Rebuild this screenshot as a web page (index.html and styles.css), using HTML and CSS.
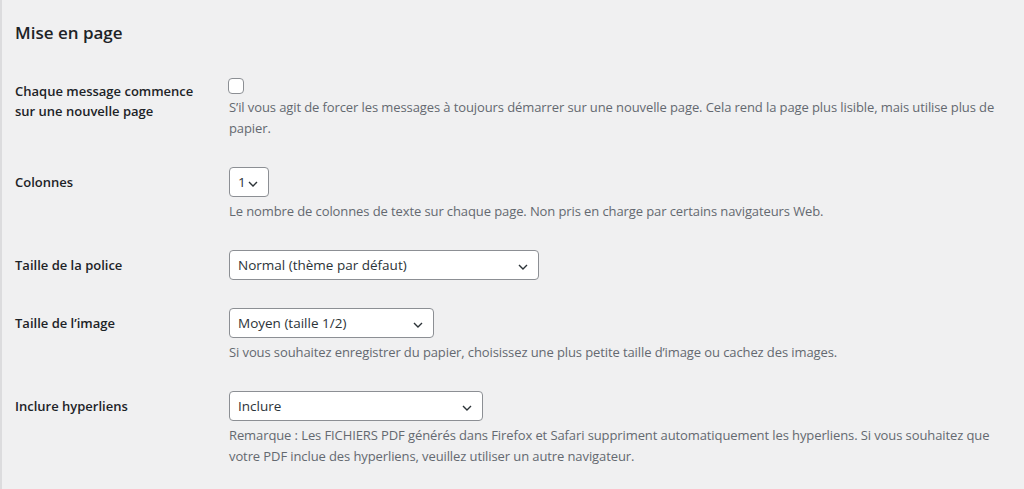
FILE: index.html
```html
<!DOCTYPE html>
<html lang="fr">
<head>
<meta charset="utf-8">
<title>Mise en page</title>
<link rel="stylesheet" href="styles.css">
</head>
<body>
<div class="wrap">
  <h2 class="title">Mise en page</h2>
  <div class="form">
    <div class="row">
      <div class="label label-multi">Chaque message commence<br>sur une nouvelle page</div>
      <div class="field">
        <input type="checkbox" class="check">
        <p class="desc">S’il vous agit de forcer les messages à toujours démarrer sur une nouvelle page. Cela rend la page plus lisible, mais utilise plus de papier.</p>
      </div>
    </div>
    <div class="row">
      <div class="label">Colonnes</div>
      <div class="field">
        <select class="select w-cols"><option>1</option></select>
        <p class="desc">Le nombre de colonnes de texte sur chaque page. Non pris en charge par certains navigateurs Web.</p>
      </div>
    </div>
    <div class="row">
      <div class="label">Taille de la police</div>
      <div class="field">
        <select class="select w-font"><option>Normal (thème par défaut)</option></select>
      </div>
    </div>
    <div class="row">
      <div class="label">Taille de l’image</div>
      <div class="field">
        <select class="select w-image"><option>Moyen (taille 1/2)</option></select>
        <p class="desc">Si vous souhaitez enregistrer du papier, choisissez une plus petite taille d’image ou cachez des images.</p>
      </div>
    </div>
    <div class="row">
      <div class="label">Inclure hyperliens</div>
      <div class="field">
        <select class="select w-links"><option>Inclure</option></select>
        <p class="desc">Remarque : Les FICHIERS PDF générés dans Firefox et Safari suppriment automatiquement les hyperliens. Si vous souhaitez que votre PDF inclue des hyperliens, veuillez utiliser un autre navigateur.</p>
      </div>
    </div>
  </div>
</div>
</body>
</html>
```
FILE: styles.css
```css
html, body {
  margin: 0;
  padding: 0;
  background: #f0f0f1;
}
body {
  font-family: "Open Sans", "Noto Sans", sans-serif;
  color: #1d2327;
  height: 489px;
  overflow: hidden;
}
.wrap {
  border-left: 2px solid #dcdcde;
  padding: 0 11px 0 13px;
  min-height: 489px;
  box-sizing: border-box;
}
.title {
  margin: 0;
  padding: 22px 0 0;
  font-size: 17px;
  font-weight: 600;
  line-height: 22px;
  color: #1d2327;
}
.form {
  padding-top: 19px;
}
.row {
  display: grid;
  grid-template-columns: 214px 1fr;
}
.label {
  padding: 20px 0 13px;
  font-size: 13px;
  font-weight: 600;
  line-height: 20px;
  color: #1d2327;
}
.label-multi {
  padding-top: 18px;
}
.field {
  padding: 15px 0 13px;
}
.check {
  appearance: none;
  -webkit-appearance: none;
  display: block;
  width: 16px;
  height: 16px;
  margin: 0 0 3px -1px;
  border: 1px solid #8c8f94;
  border-radius: 4px;
  background: #fff;
  box-sizing: border-box;
}
.desc {
  margin: 4px 0 0;
  font-size: 13px;
  line-height: 21px;
  letter-spacing: -0.1px;
  color: #646970;
}
.check + .desc {
  margin-top: 0;
}
.select {
  appearance: none;
  -webkit-appearance: none;
  display: block;
  height: 30px;
  margin: 0;
  padding: 0 24px 0 8px;
  border: 1px solid #8c8f94;
  border-radius: 4px;
  box-sizing: border-box;
  font-family: "Open Sans", "Noto Sans", sans-serif;
  font-size: 13.5px;
  color: #2c3338;
  background: #fff url("data:image/svg+xml;utf8,<svg xmlns='http://www.w3.org/2000/svg' width='10' height='6' viewBox='0 0 10 6'><polyline points='1,1 5,5 9,1' fill='none' stroke='%232c3338' stroke-width='1.4'/></svg>") no-repeat right 10px top 13px;
  background-size: 10px 6px;
}
.w-cols { width: 40px; }
.w-font { width: 310px; }
.w-image { width: 205px; }
.w-links { width: 254px; }
```
